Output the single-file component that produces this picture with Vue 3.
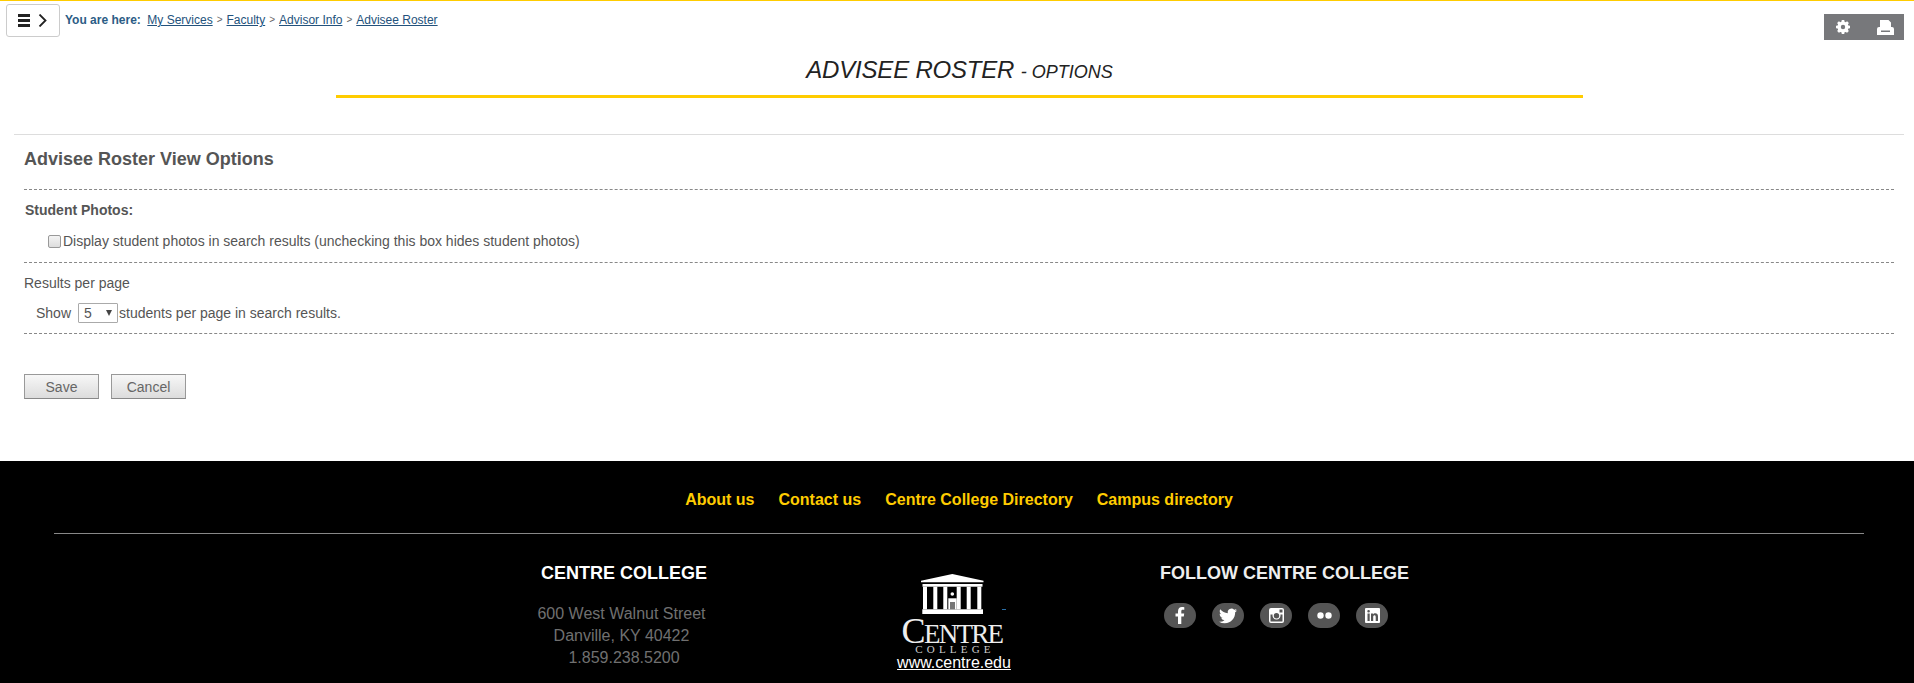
<script setup>
const links = ['About us', 'Contact us', 'Centre College Directory', 'Campus directory']
const crumbs = ['Faculty', 'Advisor Info', 'Advisee Roster']
const columns = [2, 12.3, 22.3, 35.7, 45.7, 56.3]
</script>

<template>
  <div class="page">
    <header class="top">
      <button class="menu" type="button" aria-label="Menu">
        <svg width="29" height="13" viewBox="0 0 29 13">
          <path d="M0 0h12v3H0zM0 5h12v3H0zM0 10h12v3H0z" fill="#222" />
          <path d="M21.500 .5l6 6-6 6" fill="none" stroke="#222" stroke-width="1.800" />
        </svg>
      </button>
      <nav class="crumbs">
        <b>You are here:</b>
        <a href="#" class="first">My Services</a>
        <template v-for="c in crumbs" :key="c">
          <span class="sep">&gt;</span><a href="#">{{ c }}</a>
        </template>
      </nav>
      <div class="tools">
        <svg width="14" height="14" viewBox="0 0 16 16">
          <path fill="#fff" fill-rule="evenodd" d="M6.600 0h2.800l.4 2 1.200.5 1.700-1.100 2 2-1.100 1.700.5 1.200 1.900.3v2.800l-1.900.4-.5 1.200 1.100 1.700-2 2-1.700-1.100-1.200.5-.4 1.900H6.600l-.4-1.900-1.200-.5-1.700 1.100-2-2 1.100-1.700-.5-1.200L0 9.400V6.600l1.900-.3.5-1.200-1.100-1.700 2-2L5 2.500l1.200-.5zM8 5.500a2.500 2.500 0 100 5 2.500 2.500 0 000-5z" />
        </svg>
        <svg width="17" height="15" viewBox="0 0 17 15">
          <path fill="#fff" fill-rule="evenodd" d="M3 0h8.500L14 2.500V7h1a2 2 0 012 2v6H0V9a2 2 0 012-2h1zM4 10.500v1.500h9v-1.500z" />
        </svg>
      </div>
    </header>

    <div class="heading">
      <h1>ADVISEE ROSTER <small>- OPTIONS</small></h1>
    </div>

    <main class="panel">
      <h2>Advisee Roster View Options</h2>
      <section class="block photos">
        <div class="label">Student Photos:</div>
        <label class="check"><input type="checkbox" />Display student photos in search results (unchecking this box hides student photos)</label>
      </section>
      <section class="block results">
        <div class="plain">Results per page</div>
        <div class="show">
          <span>Show</span>
          <span class="select">5<i></i></span>
          <span>students per page in search results.</span>
        </div>
      </section>
      <div class="actions">
        <button type="button">Save</button>
        <button type="button">Cancel</button>
      </div>
    </main>

    <footer class="footer">
      <div class="flinks">
        <a v-for="l in links" :key="l" href="#">{{ l }}</a>
      </div>
      <div class="fcols">
        <div class="addr">
          <h3>CENTRE COLLEGE</h3>
          <p>600 West Walnut Street</p>
          <p>Danville, KY 40422</p>
          <p>1.859.238.5200</p>
        </div>
        <div class="logo">
          <svg class="building" width="86" height="41" viewBox="0 0 86 41">
            <path fill="#fff" d="M31.300 0L62.500 6.700V8.300H0V6.700z" />
            <rect x="1.500" y="10" width="60" height="2.700" fill="#fff" />
            <rect v-for="x in columns" :key="x" :x="x" y="12.700" width="4" height="22.600" fill="#fff" />
            <rect x="1.300" y="35.300" width="60.700" height="4.700" fill="#fff" />
            <rect x="27.300" y="24.300" width="8.400" height="11" fill="#fff" />
            <rect x="29" y="28" width="5" height="7.300" fill="#777" />
            <circle cx="31.300" cy="20" r="1.800" fill="#fff" />
            <rect x="81" y="35" width="4" height="1" fill="#2a6fa8" />
          </svg>
          <div class="cname"><span>C</span>ENTRE</div>
          <div class="csub">COLLEGE</div>
          <a href="#" class="www">www.centre.edu</a>
        </div>
        <div class="follow">
          <h3>FOLLOW CENTRE COLLEGE</h3>
          <div class="social">
            <span class="pill">
              <svg width="10" height="17" viewBox="0 0 10 17"><path fill="#fff" d="M3 17V9.500H.5V6.500H3V4.300C3 1.500 4.600 0 7 0c1 0 2 .1 2.300.2v2.600H7.800C6.600 2.800 6.300 3.400 6.300 4.300v2.200h2.900l-.4 3H6.300V17z" /></svg>
            </span>
            <span class="pill">
              <svg width="18" height="18" viewBox="0 0 24 24"><path fill="#fff" d="M23.953 4.570a10 10 0 01-2.825.775 4.958 4.958 0 002.163-2.723c-.951.555-2.005.959-3.127 1.184a4.920 4.920 0 00-8.384 4.482C7.690 8.095 4.067 6.130 1.640 3.162a4.822 4.822 0 00-.666 2.475c0 1.710.870 3.213 2.188 4.096a4.904 4.904 0 01-2.228-.616v.060a4.923 4.923 0 003.946 4.827 4.996 4.996 0 01-2.212.085 4.936 4.936 0 004.604 3.417 9.867 9.867 0 01-6.102 2.105c-.390 0-.779-.023-1.170-.067a13.995 13.995 0 007.557 2.209c9.053 0 13.998-7.496 13.998-13.985 0-.210 0-.420-.015-.630A9.935 9.935 0 0024 4.590z" /></svg>
            </span>
            <span class="pill">
              <svg width="15" height="15" viewBox="0 0 15 15"><path fill="#fff" fill-rule="evenodd" d="M2 0h11a2 2 0 012 2v11a2 2 0 01-2 2H2a2 2 0 01-2-2V2a2 2 0 012-2zM10.500 1.500v3h3v-3zM1.500 6.500V13a.5.5 0 00.5.5h11a.5.5 0 00.5-.5V6.500h-2.100a4 4 0 11-7.800 0zM7.500 5a2.700 2.700 0 100 5.400 2.700 2.700 0 000-5.400z" /></svg>
            </span>
            <span class="pill">
              <svg width="15" height="7" viewBox="0 0 15 7"><circle cx="3.500" cy="3.500" r="3.200" fill="#fff" /><circle cx="11.500" cy="3.500" r="3.200" fill="#fff" /></svg>
            </span>
            <span class="pill">
              <svg width="15" height="15" viewBox="0 0 15 15"><path fill="#fff" fill-rule="evenodd" d="M1 0h13a1 1 0 011 1v13a1 1 0 01-1 1H1a1 1 0 01-1-1V1a1 1 0 011-1zM2.500 5.500V13h2.200V5.500zM3.600 2a1.300 1.300 0 100 2.600 1.300 1.300 0 000-2.600zM6 5.500V13h2.200V9c0-1 .5-1.700 1.300-1.700s1.200.6 1.200 1.700v4H13V8.500c0-2-1.100-3.200-2.700-3.200-1 0-1.700.5-2.100 1.100V5.500z" /></svg>
            </span>
          </div>
        </div>
      </div>
    </footer>
  </div>
</template>

<style>
html, body { margin: 0; background: #fff; overflow: hidden; }
</style>

<style scoped>
.page {
  width: 1914px;
  height: 683px;
  overflow: hidden;
  border-top: 1px solid #ffcc00;
  box-sizing: border-box;
  font-family: "Liberation Sans", Arial, sans-serif;
  color: #555;
}
.top {
  display: flex;
  align-items: flex-start;
  padding: 3px 10px 0 6px;
  height: 37px;
  box-sizing: border-box;
}
.menu {
  width: 54px;
  height: 33px;
  padding: 0 0 0 11px;
  border: 1px solid #ccc;
  border-radius: 3px;
  background: #fff;
  display: flex;
  align-items: center;
  box-sizing: border-box;
}
.crumbs {
  margin: 9px 0 0 5px;
  font-size: 12px;
  line-height: 14px;
  color: #666;
  display: flex;
}
.crumbs b { color: #2c5c85; margin-right: 6.500px; }
.crumbs a { color: #23527c; text-decoration: underline; }
.sep { margin: 0 4px; font-size: 10px; color: #666; }
.tools {
  margin: 10px 0 0 auto;
  width: 80px;
  height: 26px;
  background: #77787b;
  display: flex;
  align-items: center;
  padding-left: 12px;
  gap: 27px;
  box-sizing: border-box;
}
.heading {
  width: 1247px;
  margin: 18px auto 0 336px;
  padding-bottom: 12px;
  border-bottom: 3px solid #ffcc00;
  text-align: center;
}
h1 {
  margin: 0;
  font-size: 24px;
  line-height: 27px;
  font-style: italic;
  font-weight: 400;
  letter-spacing: -.2px;
  color: #222;
}
h1 small { font-size: 18px; line-height: 0; color: #222; letter-spacing: 0; }
.panel {
  margin: 36px 10px 0 14px;
  border-top: 1px solid #ddd;
  padding: 0 10px;
  height: 327px;
  box-sizing: border-box;
}
h2 {
  margin: 0;
  padding: 14px 0 20px;
  font-size: 18px;
  line-height: 20px;
  font-weight: 700;
  color: #555;
  border-bottom: 1px dashed #888;
}
.block { border-bottom: 1px dashed #888; }
.photos { height: 73px; padding-top: 12px; box-sizing: border-box; }
.label { font-size: 14px; line-height: 16px; font-weight: 700; margin-left: 1px; }
.check {
  display: flex;
  align-items: center;
  margin: 15px 0 0 24px;
  font-size: 14px;
  line-height: 16px;
}
.check input {
  appearance: none;
  width: 13px;
  height: 13px;
  margin: 0 2px 0 0;
  border: 1px solid #999;
  border-radius: 2px;
  background: linear-gradient(#f4f4f4, #ddd);
  box-sizing: border-box;
}
.results { height: 71px; padding-top: 12px; box-sizing: border-box; font-size: 14px; line-height: 16px; }
.show { display: flex; align-items: center; margin: 12px 0 0 12px; }
.select {
  position: relative;
  width: 40px;
  height: 20px;
  margin: 0 1px 0 7px;
  padding-left: 5px;
  border: 1px solid #aaa;
  border-radius: 1px;
  box-sizing: border-box;
  line-height: 18px;
}
.select i {
  position: absolute;
  right: 5px;
  top: 6px;
  border-left: 3px solid transparent;
  border-right: 3px solid transparent;
  border-top: 6px solid #444;
}
.actions { display: flex; gap: 12px; margin-top: 40px; }
.actions button {
  width: 75px;
  height: 25px;
  padding: 0;
  border: 1px solid #999;
  border-bottom-color: #888;
  background: linear-gradient(#f7f7f7, #dcdcdc);
  font: 14px "Liberation Sans", Arial, sans-serif;
  color: #666;
}
.footer {
  background: #000;
  height: 222px;
  overflow: hidden;
}
.flinks {
  display: flex;
  justify-content: center;
  gap: 24px;
  margin: 0 50px 0 54px;
  padding: 30px 0 24px;
  border-bottom: 1px solid #888;
  font-size: 16px;
  line-height: 18px;
  font-weight: 700;
}
.flinks a { color: #ffcc00; text-decoration: none; }
.fcols {
  display: grid;
  grid-template-columns: 260px 398px 1fr;
  padding: 29px 0 0 494px;
}
h3 {
  margin: 0;
  font-size: 18px;
  line-height: 20px;
  font-weight: 700;
  color: #eee;
}
.addr { text-align: center; }
.addr h3 { color: #fff; margin-bottom: 20px; }
.addr p { margin: 0; font-size: 16px; line-height: 22px; color: #707070; }
.addr p:not(:last-child) { padding-right: 5px; }
.logo { text-align: center; margin-top: 11px; }
.building { display: block; margin: 0 0 0 167px; }
.cname {
  font-family: "Liberation Serif", serif;
  color: #eee;
  font-size: 27px;
  line-height: 22px;
  margin-top: 8px;
  letter-spacing: -1.700px;
  padding-right: 2px;
}
.cname span { font-size: 36px; line-height: 0; }
.csub {
  font-family: "Liberation Serif", serif;
  color: #ccc;
  font-size: 11px;
  line-height: 8px;
  letter-spacing: 4.200px;
  padding-left: 4px;
}
.www { display: block; margin-top: 1px; padding-left: 2px; color: #fff; text-decoration: underline; font-size: 16px; line-height: 18px; }
.follow { margin-left: 8px; }
.social { display: flex; gap: 16px; margin: 20px 0 0 4px; }
.pill {
  width: 32px;
  height: 25px;
  border-radius: 12.5px;
  background: #555;
  display: flex;
  align-items: center;
  justify-content: center;
}
</style>
